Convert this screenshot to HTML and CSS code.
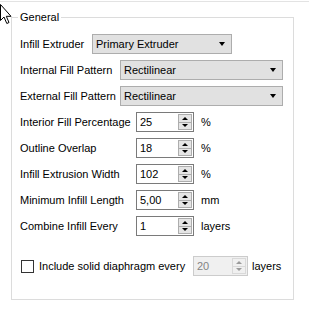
FILE: index.html
```html
<!DOCTYPE html>
<html>
<head>
<meta charset="utf-8">
<link rel="stylesheet" href="styles.css">
</head>
<body>
<div class="topline"></div>
<fieldset class="group">
  <legend>General</legend>
  <div class="rows">
    <div class="row">
      <span class="label w72">Infill Extruder</span>
      <div class="combo w140"><span>Primary Extruder</span><i class="arrow"></i></div>
    </div>
    <div class="row">
      <span class="label w100">Internal Fill Pattern</span>
      <div class="combo w163"><span>Rectilinear</span><i class="arrow"></i></div>
    </div>
    <div class="row">
      <span class="label w100">External Fill Pattern</span>
      <div class="combo w163"><span>Rectilinear</span><i class="arrow"></i></div>
    </div>
    <div class="row">
      <span class="label w116">Interior Fill Percentage</span>
      <div class="spin"><span class="val">25</span><div class="btns"><i class="up"></i><i class="down"></i></div></div>
      <span class="unit">%</span>
    </div>
    <div class="row">
      <span class="label w116">Outline Overlap</span>
      <div class="spin"><span class="val">18</span><div class="btns"><i class="up"></i><i class="down"></i></div></div>
      <span class="unit">%</span>
    </div>
    <div class="row">
      <span class="label w116">Infill Extrusion Width</span>
      <div class="spin"><span class="val">102</span><div class="btns"><i class="up"></i><i class="down"></i></div></div>
      <span class="unit">%</span>
    </div>
    <div class="row">
      <span class="label w116">Minimum Infill Length</span>
      <div class="spin"><span class="val">5,00</span><div class="btns"><i class="up"></i><i class="down"></i></div></div>
      <span class="unit">mm</span>
    </div>
    <div class="row">
      <span class="label w116">Combine Infill Every</span>
      <div class="spin"><span class="val">1</span><div class="btns"><i class="up"></i><i class="down"></i></div></div>
      <span class="unit">layers</span>
    </div>
  </div>
  <div class="row checkrow">
    <span class="check"></span>
    <span class="label w154">Include solid diaphragm every</span>
    <div class="spin disabled"><span class="val">20</span><div class="btns"><i class="up"></i><i class="down"></i></div></div>
    <span class="unit u4">layers</span>
  </div>
</fieldset>
<svg class="cursor" width="13" height="21" viewBox="0 0 13 21">
  <path d="M1.5 0.5 L1.5 16.5 L5 13 L7.8 19.5 L10 18.5 L7.3 12.3 L12 12.3 Z" fill="#fff" stroke="#000" stroke-width="1" stroke-linejoin="miter"/>
</svg>
</body>
</html>
```

FILE: styles.css
```css
html, body {
  margin: 0;
  padding: 0;
  background: #fff;
}
body {
  font-family: "Liberation Sans", Arial, sans-serif;
  font-size: 11px;
  color: #000;
  position: relative;
  width: 309px;
  height: 311px;
  overflow: hidden;
}
.topline {
  height: 1px;
  margin-top: 1px;
  background: #e3e3e3;
}
.group {
  box-sizing: border-box;
  margin: 8px 0 0 11px;
  width: 283px;
  border: 1px solid #dcdcdc;
  padding: 10px 8px 23px 8px;
  min-width: 0;
}
.group legend {
  padding: 0 2px;
  margin-left: -2px;
  line-height: 14px;
  height: 14px;
}
.rows {
  display: flex;
  flex-direction: column;
  gap: 6px;
}
.row {
  display: flex;
  align-items: center;
  height: 20px;
}
.label {
  flex: none;
  white-space: nowrap;
}
.w72 { width: 72px; }
.w100 { width: 100px; }
.w116 { width: 116px; }
.w154 { width: 154px; }
.w140 { width: 140px; }
.w163 { width: 163px; }
.combo {
  box-sizing: border-box;
  height: 20px;
  background: #e1e1e1;
  border: 1px solid #adadad;
  display: flex;
  align-items: center;
  justify-content: space-between;
  padding: 0 6px 0 3px;
}
.arrow {
  width: 0;
  height: 0;
  border-left: 3.5px solid transparent;
  border-right: 3.5px solid transparent;
  border-top: 4px solid #000;
}
.spin {
  box-sizing: border-box;
  width: 58px;
  height: 20px;
  border: 1px solid #7a7a7a;
  background: #fff;
  display: flex;
  align-items: stretch;
  justify-content: space-between;
  padding: 1px 1px 1px 3px;
}
.spin .val {
  align-self: center;
}
.btns {
  box-sizing: border-box;
  width: 14px;
  border: 1px solid #adadad;
  background: #e5e5e5;
  display: flex;
  flex-direction: column;
}
.btns i {
  flex: 1;
  display: flex;
  align-items: center;
  justify-content: center;
}
.btns .up {
  border-bottom: 1px solid #adadad;
}
.btns .up::before {
  content: "";
  border-left: 3px solid transparent;
  border-right: 3px solid transparent;
  border-bottom: 3px solid #000;
}
.btns .down::before {
  content: "";
  border-left: 3px solid transparent;
  border-right: 3px solid transparent;
  border-top: 3px solid #000;
}
.unit {
  margin-left: 7px;
}
.u4 { margin-left: 4px; }
.checkrow {
  margin-top: 20px;
}
.check {
  box-sizing: border-box;
  flex: none;
  width: 13px;
  height: 13px;
  border: 1px solid #333;
  background: #fff;
  margin-left: 1px;
  margin-right: 5px;
}
.spin.disabled {
  width: 55px;
  border-color: #cccccc;
  background: #f0f0f0;
  color: #838383;
}
.spin.disabled .btns {
  border-color: #d9d9d9;
  background: #f0f0f0;
}
.spin.disabled .btns .up { border-bottom-color: #d9d9d9; }
.spin.disabled .btns .up::before { border-bottom-color: #9a9a9a; }
.spin.disabled .btns .down::before { border-top-color: #9a9a9a; }
.cursor {
  position: absolute;
  left: -1px;
  top: 4px;
}
```
